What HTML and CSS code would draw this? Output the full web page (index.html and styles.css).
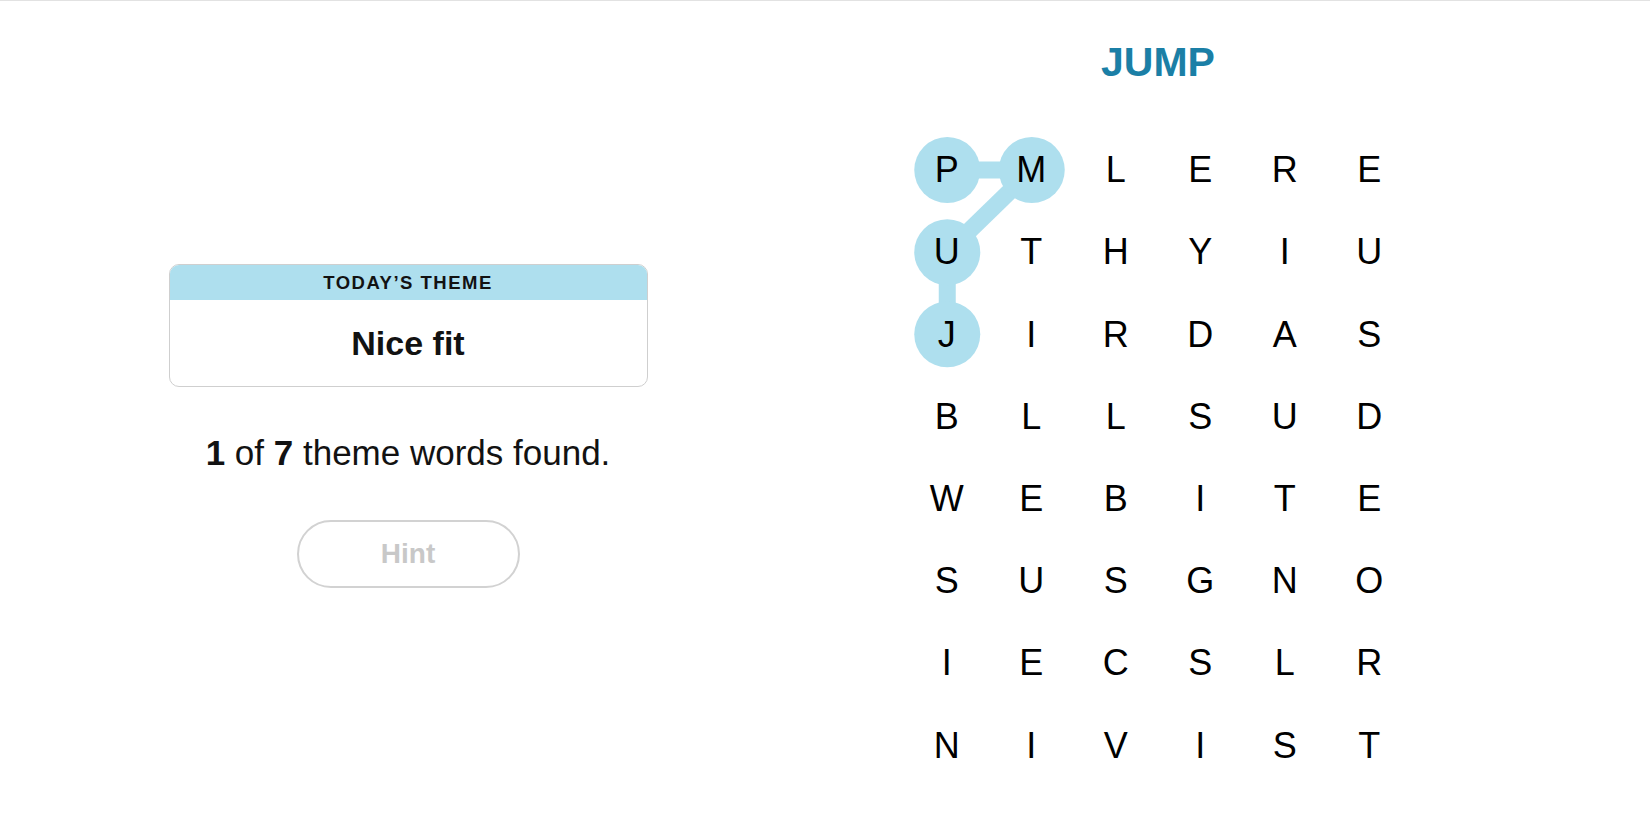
FILE: index.html
```html
<!DOCTYPE html>
<html lang="en">
<head>
  <meta charset="UTF-8" />
  <title>Strands</title>
  <link rel="stylesheet" href="styles.css">
</head>
<body>
  <div class="page">
    <section class="sidebar">
      <div class="theme-card">
        <div class="theme-label">TODAY’S THEME</div>
        <div class="theme-name">Nice fit</div>
      </div>
      <p class="progress"><b>1</b> of <b>7</b> theme words found.</p>
      <button class="hint-btn" disabled>Hint</button>
    </section>

    <section class="board">
      <h1 class="current-word">JUMP</h1>
      <div class="grid">
        <svg class="path" viewBox="0 0 507 658" preserveAspectRatio="none">
          <g stroke="#aedfee" stroke-width="17" fill="none">
            <line x1="42.25" y1="41.1" x2="126.75" y2="41.1" />
            <line x1="126.75" y1="41.1" x2="42.25" y2="123.3" />
            <line x1="42.25" y1="123.3" x2="42.25" y2="205.5" />
          </g>
          <g fill="#aedfee">
            <circle cx="42.25" cy="41.1" r="33" />
            <circle cx="126.75" cy="41.1" r="33" />
            <circle cx="42.25" cy="123.3" r="33" />
            <circle cx="42.25" cy="205.5" r="33" />
          </g>
        </svg>
        <span>P</span><span>M</span><span>L</span><span>E</span><span>R</span><span>E</span>
        <span>U</span><span>T</span><span>H</span><span>Y</span><span>I</span><span>U</span>
        <span>J</span><span>I</span><span>R</span><span>D</span><span>A</span><span>S</span>
        <span>B</span><span>L</span><span>L</span><span>S</span><span>U</span><span>D</span>
        <span>W</span><span>E</span><span>B</span><span>I</span><span>T</span><span>E</span>
        <span>S</span><span>U</span><span>S</span><span>G</span><span>N</span><span>O</span>
        <span>I</span><span>E</span><span>C</span><span>S</span><span>L</span><span>R</span>
        <span>N</span><span>I</span><span>V</span><span>I</span><span>S</span><span>T</span>
      </div>
    </section>
  </div>
</body>
</html>
```

FILE: styles.css
```css
* {
  box-sizing: border-box;
}

html, body {
  margin: 0;
  height: 100%;
  background: #fff;
  font-family: 'Liberation Sans', Arial, sans-serif;
  color: #121212;
}

.page {
  display: flex;
  height: 825px;
  border-top: 1px solid #e2e2e2;
  overflow: hidden;
}

/* left side: theme + progress */
.sidebar {
  flex: 0 0 816px;
  display: flex;
  flex-direction: column;
  align-items: center;
  padding-top: 263px;
}

.theme-card {
  width: 479px;
  border: 1px solid #cfcfcf;
  border-radius: 10px;
  overflow: hidden;
}

.theme-label {
  height: 35px;
  background: #aedfee;
  font-size: 18.5px;
  font-weight: 700;
  letter-spacing: 1.5px;
  display: flex;
  align-items: center;
  justify-content: center;
  padding-top: 1px;
}

.theme-name {
  height: 86px;
  display: flex;
  align-items: center;
  justify-content: center;
  font-size: 34px;
  font-weight: 700;
}

.progress {
  margin: 45px 0 0;
  font-size: 35px;
  line-height: 1.2;
}

.hint-btn {
  margin-top: 46px;
  width: 223px;
  height: 68px;
  border: 2px solid #d2d2d2;
  border-radius: 34px;
  background: #fff;
  color: #c8c8c8;
  font-family: inherit;
  font-size: 28px;
  font-weight: 700;
}

/* right side: the board */
.board {
  flex: 0 0 684px;
  display: flex;
  flex-direction: column;
  align-items: center;
}

.current-word {
  margin: 37px 0 0;
  font-size: 41px;
  line-height: 1.2;
  font-weight: 700;
  color: #1b7fa6;
}

.grid {
  position: relative;
  isolation: isolate;
  margin-top: 42px;
  display: grid;
  grid-template-columns: repeat(6, 84.5px);
  grid-auto-rows: 82.2px;
}

.grid .path {
  position: absolute;
  inset: 0;
  width: 100%;
  height: 100%;
  z-index: -1;
}

.grid span {
  display: flex;
  align-items: center;
  justify-content: center;
  font-size: 36px;
  color: #000;
}
```
